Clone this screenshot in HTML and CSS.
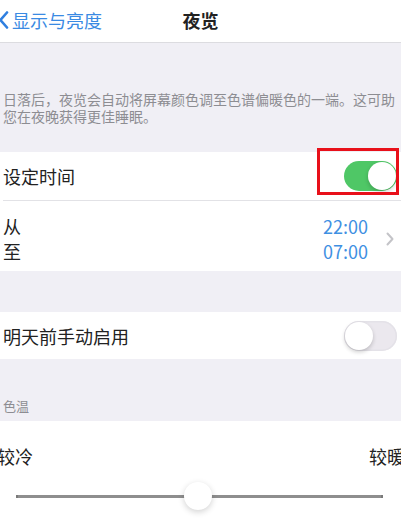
FILE: index.html
```html
<!DOCTYPE html>
<html lang="zh-CN">
<head>
    <meta charset="UTF-8">
    <title>夜览</title>
    <link rel="stylesheet" href="styles.css">
</head>
<body>
    <div class="screen">
        <div class="nav">
            <div class="nav-back">
                <svg class="back-icon" width="10" height="18" viewBox="0 0 10 18">
                    <polyline points="8,1.5 1.5,9 8,16.5" fill="none" stroke="#2f7fe0" stroke-width="2.6" stroke-linecap="round" stroke-linejoin="round"/>
                </svg>
                <span>显示与亮度</span>
            </div>
            <div class="nav-title">夜览</div>
            <div></div>
        </div>

        <div class="note">日落后，夜览会自动将屏幕颜色调至色谱偏暖色的一端。这可助您在夜晚获得更佳睡眠。</div>

        <div class="group">
            <div class="row row-schedule">
                <span class="row-label">设定时间</span>
                <div class="switch on"><div class="knob"></div></div>
                <div class="mark"></div>
            </div>
            <div class="row row-times">
                <div class="time-labels">
                    <span>从</span>
                    <span>至</span>
                </div>
                <div class="time-values">
                    <span>22:00</span>
                    <span>07:00</span>
                </div>
                <svg class="chevron" width="8" height="14" viewBox="0 0 8 14">
                    <polyline points="1.5,1.5 6.5,7 1.5,12.5" fill="none" stroke="#c4c4c8" stroke-width="2" stroke-linecap="round" stroke-linejoin="round"/>
                </svg>
            </div>
        </div>

        <div class="group group-manual">
            <div class="row row-manual">
                <span class="row-label">明天前手动启用</span>
                <div class="switch"><div class="knob"></div></div>
            </div>
        </div>

        <div class="section-title">色温</div>

        <div class="group group-temp">
            <div class="temp-labels">
                <span class="cool">较冷</span>
                <span class="warm">较暖</span>
            </div>
            <div class="slider">
                <div class="slider-track"></div>
                <div class="slider-thumb"></div>
            </div>
        </div>
    </div>
</body>
</html>
```

FILE: styles.css
```css
body {
    margin: 0;
    padding: 0;
    font-family: "Noto Sans CJK SC", "Noto Sans", sans-serif;
    background-color: #f0eff5;
    color: #222222;
}

.screen {
    width: 401px;
    height: 525px;
    overflow: hidden;
    background: #f0eff5;
}

.nav {
    height: 42px;
    background: #ffffff;
    border-bottom: 1px solid #dcdce0;
    display: grid;
    grid-template-columns: 1fr auto 1fr;
    align-items: center;
}

.nav-back {
    display: flex;
    align-items: center;
    gap: 3px;
    color: #3a8ae3;
    font-size: 18px;
    line-height: 24px;
    margin-top: -2px;
}

.back-icon {
    margin-left: -1px;
}

.nav-title {
    font-size: 18px;
    font-weight: bold;
    color: #222222;
    margin-top: -2px;
}

.note {
    font-size: 14px;
    line-height: 17px;
    color: #8d8d92;
    padding: 48px 0 27px 3px;
}

.group {
    background: #ffffff;
}

.row {
    display: flex;
    align-items: center;
    padding-left: 3px;
}

.row-label {
    font-size: 18px;
}

.row-schedule {
    position: relative;
    height: 48px;
    border-bottom: 1px solid #e2e2e6;
    margin-left: 3px;
    padding-left: 0;
}

.row-times {
    height: 70px;
    padding-top: 5px;
    box-sizing: border-box;
}

.row-manual {
    height: 47px;
}

.group-manual {
    margin-top: 41px;
}

.switch {
    margin-left: auto;
    margin-right: 4px;
    width: 53px;
    height: 30px;
    border-radius: 15px;
    box-shadow: inset 0 0 0 1.5px #e4e2e8;
    display: flex;
    align-items: center;
    padding: 1px;
    box-sizing: border-box;
    background-color: #ebe8ee;
}

.switch .knob {
    width: 28px;
    height: 28px;
    border-radius: 50%;
    background: #ffffff;
    box-shadow: 0 2px 4px rgba(0, 0, 0, 0.2);
}

.switch.on {
    background-color: #4fc766;
    box-shadow: none;
    justify-content: flex-end;
}

.mark {
    position: absolute;
    left: 314px;
    top: -4px;
    width: 76px;
    height: 41px;
    border: 3px solid #e8101a;
}

.time-labels,
.time-values {
    display: flex;
    flex-direction: column;
    font-size: 18px;
    line-height: 25px;
}

.time-values {
    margin-left: auto;
    color: #3f90e2;
}

.chevron {
    margin: 0 7px 0 18px;
}

.section-title {
    font-size: 13px;
    line-height: 16px;
    color: #8d8d92;
    padding: 39px 0 7px 3px;
}

.group-temp {
    height: 110px;
    padding-top: 23px;
    box-sizing: border-box;
}

.temp-labels {
    display: flex;
    justify-content: space-between;
    font-size: 18px;
    line-height: 24px;
    margin: 0 -4px 0 -3px;
}

.slider {
    position: relative;
    height: 30px;
    margin: 13px 18px 0 16px;
    display: flex;
    align-items: center;
}

.slider-track {
    width: 100%;
    height: 3px;
    background: #8e8e8e;
    border-left: 2px solid #7a7a7a;
    border-right: 2px solid #7a7a7a;
    box-sizing: border-box;
}

.slider-thumb {
    position: absolute;
    left: 168px;
    top: 1px;
    width: 28px;
    height: 28px;
    border-radius: 50%;
    background: #ffffff;
    box-shadow: 0 2px 6px rgba(0, 0, 0, 0.18);
}
```
